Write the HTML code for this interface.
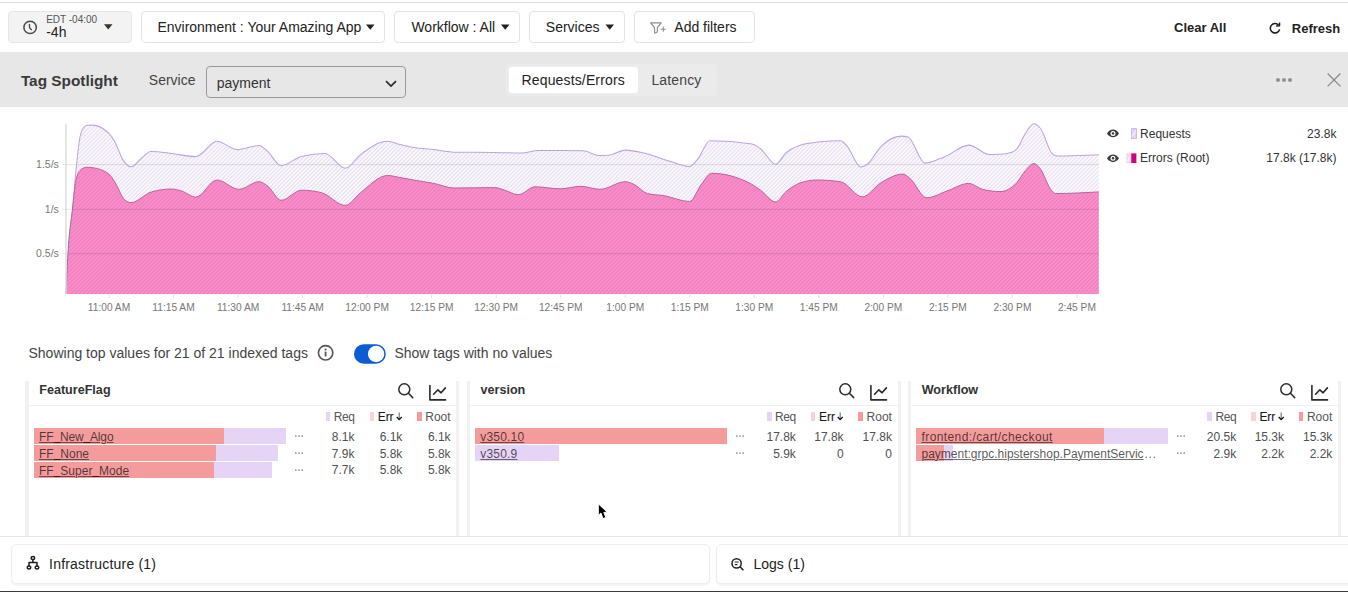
<!DOCTYPE html>
<html><head><meta charset="utf-8">
<style>
html,body{margin:0;padding:0;width:1348px;height:592px;overflow:hidden;background:#fff;}
body{position:relative;font-family:"Liberation Sans",sans-serif;}
.t{position:absolute;white-space:nowrap;}
.box{position:absolute;box-sizing:border-box;}
svg{position:absolute;overflow:visible;}
</style></head><body>
<div class="box" style="left:0;top:1.5px;width:1348px;height:1px;background:#dcdcdc"></div>
<div class="box" style="left:8px;top:11px;width:124px;height:32px;background:#f3f3f3;border:1px solid #e6e6e6;border-radius:4px"></div>
<svg style="left:0;top:0" width="1348" height="52"><circle cx="30.1" cy="27.4" r="6.2" fill="none" stroke="#4a4a4a" stroke-width="1.5"/><path d="M29.4,24.4 L29.6,27.6 Q29.9,28.6 31.4,29.6" fill="none" stroke="#4a4a4a" stroke-width="1.35" stroke-linecap="round"/><path d="M104,24.3 L112.5,24.3 L108.25,29.5 Z" fill="#333"/><path d="M366,24.5 L374.5,24.5 L370.25,29.8 Z" fill="#222"/><path d="M501,24.5 L509.5,24.5 L505.25,29.8 Z" fill="#222"/><path d="M605.5,24.5 L614,24.5 L609.75,29.8 Z" fill="#222"/><path d="M650.6,22.9 L661.3,22.9 L657.4,27.4 L657.3,31.9 L654.7,33.2 L654.4,27.4 Z" fill="none" stroke="#8e8e8e" stroke-width="1.15" stroke-linejoin="round"/><path d="M660.7,29.2 L665.8,29.2 M663.25,26.6 L663.25,31.8" stroke="#8e8e8e" stroke-width="1.05"/><path d="M1278.6,25.2 A4.7,4.7 0 1 0 1279.6,29.4" fill="none" stroke="#1a1a1a" stroke-width="1.5"/><path d="M1279.5,22.4 L1279.5,25.8 L1276.1,26.1" fill="none" stroke="#1a1a1a" stroke-width="1.5" stroke-linejoin="round"/></svg>
<div class="t" style="left:46.2px;top:14.84px;font-size:10px;line-height:10px;color:#555;font-weight:400;">EDT -04:00</div>
<div class="t" style="left:46.2px;top:25.35px;font-size:14px;line-height:14px;color:#222;font-weight:400;">-4h</div>
<div class="box" style="left:140.5px;top:11px;width:244.5px;height:32px;border:1px solid #e3e3e3;border-radius:4px"></div>
<div class="box" style="left:394px;top:11px;width:126px;height:32px;border:1px solid #e3e3e3;border-radius:4px"></div>
<div class="box" style="left:529px;top:11px;width:95.5px;height:32px;border:1px solid #e3e3e3;border-radius:4px"></div>
<div class="box" style="left:633.5px;top:11px;width:121.5px;height:32px;border:1px solid #e3e3e3;border-radius:4px"></div>
<div class="t" style="left:157.4px;top:20.15px;font-size:14px;line-height:14px;color:#222;font-weight:400;">Environment : Your Amazing App</div>
<div class="t" style="left:411.4px;top:20.15px;font-size:14px;line-height:14px;color:#222;font-weight:400;">Workflow : All</div>
<div class="t" style="left:545.8px;top:20.15px;font-size:14px;line-height:14px;color:#222;font-weight:400;">Services</div>
<div class="t" style="left:674.3px;top:20.15px;font-size:14px;line-height:14px;color:#222;font-weight:400;">Add filters</div>
<div class="t" style="left:1174px;top:20.80px;font-size:13px;line-height:13px;color:#222;font-weight:700;">Clear All</div>
<div class="t" style="left:1291.8px;top:21.90px;font-size:13px;line-height:13px;color:#222;font-weight:700;">Refresh</div>
<div class="box" style="left:0;top:52px;width:1348px;height:55px;background:#e7e7e7"></div>
<div class="t" style="left:20.9px;top:72.81px;font-size:15.35px;line-height:15.35px;color:#3a3a3a;font-weight:700;">Tag Spotlight</div>
<div class="t" style="left:148.8px;top:73.15px;font-size:14px;line-height:14px;color:#444;font-weight:400;">Service</div>
<div class="box" style="left:206px;top:66.3px;width:200px;height:31.8px;border:1.4px solid #9a9a9a;border-radius:4px"></div>
<div class="t" style="left:216.8px;top:75.75px;font-size:14px;line-height:14px;color:#333;font-weight:400;">payment</div>
<div class="box" style="left:506px;top:64px;width:211px;height:31.5px;background:#ebebeb;border-radius:4px"></div>
<div class="box" style="left:509px;top:67px;width:129px;height:26px;background:#fff;border-radius:3px"></div>
<div class="t" style="left:521.5px;top:73.15px;font-size:14px;line-height:14px;color:#222;font-weight:400;letter-spacing:0.15px">Requests/Errors</div>
<div class="t" style="left:651.4px;top:73.15px;font-size:14px;line-height:14px;color:#444;font-weight:400;letter-spacing:0.15px">Latency</div>
<svg style="left:0;top:0" width="1348" height="110"><path d="M386,81.2 L391,86 L396,81.2" fill="none" stroke="#2a2a2a" stroke-width="1.7"/><circle cx="1278" cy="80" r="2" fill="#8f8f8f"/><circle cx="1284" cy="80" r="2" fill="#8f8f8f"/><circle cx="1290" cy="80" r="2" fill="#8f8f8f"/><path d="M1327.6,73.5 L1340.4,86.4 M1340.4,73.5 L1327.6,86.4" stroke="#8a8a8a" stroke-width="1.3"/></svg>
<svg style="left:0;top:0" width="1348" height="330"><defs><pattern id="hR" width="2.83" height="4" patternUnits="userSpaceOnUse" patternTransform="rotate(45)"><rect width="2.83" height="4" fill="#fcf9fe"/><rect width="1" height="4" fill="#e4ddee"/></pattern><pattern id="hE" width="2.83" height="4" patternUnits="userSpaceOnUse" patternTransform="rotate(45)"><rect width="2.83" height="4" fill="#fb8dca"/><rect width="0.95" height="4" fill="#ec7dbc"/></pattern></defs><path d="M66.0,294.0 C66.8,279.3 67.5,264.6 68.3,253.0 C69.7,231.2 71.2,224.5 72.6,209.0 C73.9,195.0 75.2,177.5 76.5,165.0 C77.5,155.4 78.5,146.1 79.5,140.0 C80.8,131.9 82.2,129.0 83.5,127.5 C84.8,126.0 86.2,125.4 87.5,125.3 C89.1,125.2 90.8,125.1 92.4,125.1 C97.8,125.1 103.2,127.8 108.6,133.2 C110.6,135.2 112.7,137.9 114.7,141.4 C117.4,146.1 120.1,155.4 122.8,159.6 C125.5,163.9 128.3,166.7 131.0,166.7 C134.3,166.7 137.7,161.1 141.0,158.6 C144.4,156.0 147.8,151.5 151.2,151.5 C158.0,151.5 164.7,152.7 171.5,153.5 C179.6,154.4 187.7,156.6 195.8,156.6 C202.8,156.6 209.9,141.2 216.9,141.2 C223.7,141.2 230.4,149.6 237.2,149.6 C244.5,149.6 251.8,145.4 259.1,145.4 C261.9,145.4 264.8,148.9 267.6,151.3 C272.1,155.1 276.6,165.7 281.1,165.7 C287.9,165.7 294.6,158.1 301.4,156.4 C309.3,154.5 317.1,153.5 325.0,153.5 C331.8,153.5 338.5,168.2 345.3,168.2 C350.4,168.2 355.4,158.5 360.5,154.7 C369.5,148.0 378.5,141.2 387.5,141.2 C391.7,141.2 395.8,143.6 400.0,144.6 C404.5,145.7 409.0,146.6 413.5,147.4 C420.3,148.5 427.0,148.8 433.8,149.6 C441.1,150.4 448.4,152.1 455.7,152.2 C468.1,152.4 480.5,152.3 492.9,152.5 C502.5,152.6 512.0,153.0 521.6,153.0 C527.2,153.0 532.9,150.5 538.5,150.5 C553.1,150.5 567.8,150.6 582.4,150.8 C588.3,150.9 594.1,155.5 600.0,155.5 C602.8,155.5 605.6,155.4 608.4,155.2 C614.0,154.8 619.7,150.1 625.3,150.1 C631.5,150.1 637.7,151.6 643.9,153.0 C652.9,155.0 661.9,158.9 670.9,161.5 C677.1,163.3 683.3,166.5 689.5,166.5 C692.3,166.5 695.2,162.2 698.0,158.9 C701.9,154.3 705.9,140.7 709.8,140.7 C723.9,140.7 737.9,141.8 752.0,144.1 C754.8,144.6 757.7,146.8 760.5,148.8 C765.6,152.4 770.6,164.3 775.7,164.3 C779.1,164.3 782.4,156.0 785.8,153.0 C790.5,148.8 795.3,146.8 800.0,145.2 C806.8,142.9 813.5,142.4 820.3,141.7 C827.0,141.0 833.8,140.7 840.5,140.7 C842.8,140.7 845.0,143.9 847.3,146.3 C851.8,151.1 856.3,167.0 860.8,167.0 C863.1,167.0 865.3,165.7 867.6,164.0 C872.1,160.7 876.6,150.7 881.1,146.3 C887.9,139.6 894.6,136.1 901.4,136.1 C903.6,136.1 905.9,136.4 908.1,137.0 C913.7,138.5 919.4,163.1 925.0,163.1 C931.8,163.1 938.5,159.1 945.3,156.4 C953.2,153.3 961.0,145.1 968.9,145.1 C975.7,145.1 982.4,154.4 989.2,154.4 C992.8,154.4 996.4,154.3 1000.0,154.2 C1003.9,154.1 1007.9,153.5 1011.8,152.2 C1013.5,151.6 1015.2,150.7 1016.9,148.8 C1019.7,145.7 1022.5,137.8 1025.3,133.6 C1028.1,129.4 1031.0,123.8 1033.8,123.8 C1036.0,123.8 1038.3,125.8 1040.5,128.5 C1044.5,133.3 1048.4,150.6 1052.4,153.9 C1054.1,155.3 1055.7,156.0 1057.4,156.0 C1071.2,156.0 1085.0,155.3 1098.8,154.7 L1098.8,294 L66,294 Z" fill="url(#hR)"/><path d="M66.0,294.0 C66.7,279.2 67.3,264.5 68.0,253.0 C69.5,227.2 71.0,222.5 72.5,209.0 C73.6,199.1 74.7,186.5 75.8,181.0 C77.2,174.0 78.6,171.9 80.0,170.5 C82.1,168.4 84.3,167.3 86.4,167.3 C88.4,167.3 90.4,167.4 92.4,167.7 C97.8,168.4 103.2,169.7 108.6,173.8 C110.6,175.3 112.7,178.9 114.7,181.9 C118.1,187.0 121.5,197.3 124.9,200.1 C126.9,201.8 129.0,202.6 131.0,202.6 C137.7,202.6 144.5,194.0 151.2,192.0 C158.0,190.0 164.7,189.0 171.5,189.0 C174.9,189.0 178.2,190.0 181.6,191.0 C186.3,192.4 191.1,197.1 195.8,197.1 C202.8,197.1 209.9,180.0 216.9,180.0 C224.2,180.0 231.6,189.3 238.9,189.3 C245.6,189.3 252.4,181.7 259.1,181.7 C261.9,181.7 264.8,184.0 267.6,186.0 C272.1,189.2 276.6,200.3 281.1,200.3 C287.9,200.3 294.6,190.2 301.4,190.2 C308.1,190.2 314.9,191.0 321.6,192.7 C329.5,194.7 337.4,205.4 345.3,205.4 C350.4,205.4 355.4,196.6 360.5,192.7 C369.5,185.8 378.5,175.5 387.5,175.5 C391.7,175.5 395.8,176.8 400.0,177.5 C404.5,178.3 409.0,179.2 413.5,180.0 C420.3,181.2 427.0,182.1 433.8,183.4 C440.5,184.7 447.3,188.0 454.0,188.0 C467.5,188.0 481.1,187.6 494.6,187.6 C498.0,187.6 501.3,189.2 504.7,190.2 C509.2,191.5 513.7,194.7 518.2,194.7 C523.8,194.7 529.5,186.8 535.1,186.8 C543.6,186.8 552.0,188.8 560.5,188.8 C567.2,188.8 574.0,186.3 580.7,186.3 C587.1,186.3 593.6,189.3 600.0,189.3 C608.4,189.3 616.9,181.7 625.3,181.7 C628.1,181.7 631.0,183.0 633.8,184.3 C638.3,186.3 642.8,192.3 647.3,193.5 C652.9,195.0 658.6,194.7 664.2,195.7 C672.6,197.1 681.1,201.5 689.5,201.5 C693.5,201.5 697.4,189.3 701.4,184.3 C704.8,180.1 708.1,173.3 711.5,173.3 C723.9,173.3 736.2,176.4 748.6,182.6 C752.6,184.6 756.5,187.4 760.5,190.2 C765.6,193.7 770.6,202.0 775.7,202.0 C779.1,202.0 782.4,194.7 785.8,191.9 C790.5,187.9 795.3,184.7 800.0,183.0 C805.6,181.0 811.3,180.0 816.9,180.0 C824.8,180.0 832.6,180.6 840.5,181.7 C847.8,182.8 855.2,196.9 862.5,196.9 C868.7,196.9 874.9,186.3 881.1,182.6 C888.4,178.3 895.7,174.1 903.0,174.1 C905.3,174.1 907.5,176.6 909.8,178.3 C915.4,182.6 921.1,197.8 926.7,197.8 C933.5,197.8 940.2,193.3 947.0,191.0 C954.3,188.5 961.6,183.4 968.9,183.4 C973.4,183.4 977.9,188.1 982.4,189.3 C988.3,190.8 994.1,191.6 1000.0,191.6 C1005.6,191.6 1011.3,188.6 1016.9,182.6 C1019.7,179.6 1022.5,173.9 1025.3,170.7 C1028.1,167.5 1031.0,163.6 1033.8,163.6 C1036.0,163.6 1038.3,166.2 1040.5,169.1 C1043.9,173.5 1047.3,185.2 1050.7,189.3 C1052.4,191.3 1054.0,193.5 1055.7,193.5 C1070.1,193.5 1084.4,192.7 1098.8,191.9 L1098.8,294 L66,294 Z" fill="url(#hE)"/><line x1="62" y1="164.6" x2="1099" y2="164.6" stroke="rgba(0,0,0,0.11)" stroke-width="1"/><line x1="62" y1="209.3" x2="1099" y2="209.3" stroke="rgba(0,0,0,0.11)" stroke-width="1"/><line x1="62" y1="253.7" x2="1099" y2="253.7" stroke="rgba(0,0,0,0.11)" stroke-width="1"/><path d="M66.0,294.0 C66.8,279.3 67.5,264.6 68.3,253.0 C69.7,231.2 71.2,224.5 72.6,209.0 C73.9,195.0 75.2,177.5 76.5,165.0 C77.5,155.4 78.5,146.1 79.5,140.0 C80.8,131.9 82.2,129.0 83.5,127.5 C84.8,126.0 86.2,125.4 87.5,125.3 C89.1,125.2 90.8,125.1 92.4,125.1 C97.8,125.1 103.2,127.8 108.6,133.2 C110.6,135.2 112.7,137.9 114.7,141.4 C117.4,146.1 120.1,155.4 122.8,159.6 C125.5,163.9 128.3,166.7 131.0,166.7 C134.3,166.7 137.7,161.1 141.0,158.6 C144.4,156.0 147.8,151.5 151.2,151.5 C158.0,151.5 164.7,152.7 171.5,153.5 C179.6,154.4 187.7,156.6 195.8,156.6 C202.8,156.6 209.9,141.2 216.9,141.2 C223.7,141.2 230.4,149.6 237.2,149.6 C244.5,149.6 251.8,145.4 259.1,145.4 C261.9,145.4 264.8,148.9 267.6,151.3 C272.1,155.1 276.6,165.7 281.1,165.7 C287.9,165.7 294.6,158.1 301.4,156.4 C309.3,154.5 317.1,153.5 325.0,153.5 C331.8,153.5 338.5,168.2 345.3,168.2 C350.4,168.2 355.4,158.5 360.5,154.7 C369.5,148.0 378.5,141.2 387.5,141.2 C391.7,141.2 395.8,143.6 400.0,144.6 C404.5,145.7 409.0,146.6 413.5,147.4 C420.3,148.5 427.0,148.8 433.8,149.6 C441.1,150.4 448.4,152.1 455.7,152.2 C468.1,152.4 480.5,152.3 492.9,152.5 C502.5,152.6 512.0,153.0 521.6,153.0 C527.2,153.0 532.9,150.5 538.5,150.5 C553.1,150.5 567.8,150.6 582.4,150.8 C588.3,150.9 594.1,155.5 600.0,155.5 C602.8,155.5 605.6,155.4 608.4,155.2 C614.0,154.8 619.7,150.1 625.3,150.1 C631.5,150.1 637.7,151.6 643.9,153.0 C652.9,155.0 661.9,158.9 670.9,161.5 C677.1,163.3 683.3,166.5 689.5,166.5 C692.3,166.5 695.2,162.2 698.0,158.9 C701.9,154.3 705.9,140.7 709.8,140.7 C723.9,140.7 737.9,141.8 752.0,144.1 C754.8,144.6 757.7,146.8 760.5,148.8 C765.6,152.4 770.6,164.3 775.7,164.3 C779.1,164.3 782.4,156.0 785.8,153.0 C790.5,148.8 795.3,146.8 800.0,145.2 C806.8,142.9 813.5,142.4 820.3,141.7 C827.0,141.0 833.8,140.7 840.5,140.7 C842.8,140.7 845.0,143.9 847.3,146.3 C851.8,151.1 856.3,167.0 860.8,167.0 C863.1,167.0 865.3,165.7 867.6,164.0 C872.1,160.7 876.6,150.7 881.1,146.3 C887.9,139.6 894.6,136.1 901.4,136.1 C903.6,136.1 905.9,136.4 908.1,137.0 C913.7,138.5 919.4,163.1 925.0,163.1 C931.8,163.1 938.5,159.1 945.3,156.4 C953.2,153.3 961.0,145.1 968.9,145.1 C975.7,145.1 982.4,154.4 989.2,154.4 C992.8,154.4 996.4,154.3 1000.0,154.2 C1003.9,154.1 1007.9,153.5 1011.8,152.2 C1013.5,151.6 1015.2,150.7 1016.9,148.8 C1019.7,145.7 1022.5,137.8 1025.3,133.6 C1028.1,129.4 1031.0,123.8 1033.8,123.8 C1036.0,123.8 1038.3,125.8 1040.5,128.5 C1044.5,133.3 1048.4,150.6 1052.4,153.9 C1054.1,155.3 1055.7,156.0 1057.4,156.0 C1071.2,156.0 1085.0,155.3 1098.8,154.7" fill="none" stroke="#bfa3de" stroke-width="1.05"/><path d="M66.0,294.0 C66.7,279.2 67.3,264.5 68.0,253.0 C69.5,227.2 71.0,222.5 72.5,209.0 C73.6,199.1 74.7,186.5 75.8,181.0 C77.2,174.0 78.6,171.9 80.0,170.5 C82.1,168.4 84.3,167.3 86.4,167.3 C88.4,167.3 90.4,167.4 92.4,167.7 C97.8,168.4 103.2,169.7 108.6,173.8 C110.6,175.3 112.7,178.9 114.7,181.9 C118.1,187.0 121.5,197.3 124.9,200.1 C126.9,201.8 129.0,202.6 131.0,202.6 C137.7,202.6 144.5,194.0 151.2,192.0 C158.0,190.0 164.7,189.0 171.5,189.0 C174.9,189.0 178.2,190.0 181.6,191.0 C186.3,192.4 191.1,197.1 195.8,197.1 C202.8,197.1 209.9,180.0 216.9,180.0 C224.2,180.0 231.6,189.3 238.9,189.3 C245.6,189.3 252.4,181.7 259.1,181.7 C261.9,181.7 264.8,184.0 267.6,186.0 C272.1,189.2 276.6,200.3 281.1,200.3 C287.9,200.3 294.6,190.2 301.4,190.2 C308.1,190.2 314.9,191.0 321.6,192.7 C329.5,194.7 337.4,205.4 345.3,205.4 C350.4,205.4 355.4,196.6 360.5,192.7 C369.5,185.8 378.5,175.5 387.5,175.5 C391.7,175.5 395.8,176.8 400.0,177.5 C404.5,178.3 409.0,179.2 413.5,180.0 C420.3,181.2 427.0,182.1 433.8,183.4 C440.5,184.7 447.3,188.0 454.0,188.0 C467.5,188.0 481.1,187.6 494.6,187.6 C498.0,187.6 501.3,189.2 504.7,190.2 C509.2,191.5 513.7,194.7 518.2,194.7 C523.8,194.7 529.5,186.8 535.1,186.8 C543.6,186.8 552.0,188.8 560.5,188.8 C567.2,188.8 574.0,186.3 580.7,186.3 C587.1,186.3 593.6,189.3 600.0,189.3 C608.4,189.3 616.9,181.7 625.3,181.7 C628.1,181.7 631.0,183.0 633.8,184.3 C638.3,186.3 642.8,192.3 647.3,193.5 C652.9,195.0 658.6,194.7 664.2,195.7 C672.6,197.1 681.1,201.5 689.5,201.5 C693.5,201.5 697.4,189.3 701.4,184.3 C704.8,180.1 708.1,173.3 711.5,173.3 C723.9,173.3 736.2,176.4 748.6,182.6 C752.6,184.6 756.5,187.4 760.5,190.2 C765.6,193.7 770.6,202.0 775.7,202.0 C779.1,202.0 782.4,194.7 785.8,191.9 C790.5,187.9 795.3,184.7 800.0,183.0 C805.6,181.0 811.3,180.0 816.9,180.0 C824.8,180.0 832.6,180.6 840.5,181.7 C847.8,182.8 855.2,196.9 862.5,196.9 C868.7,196.9 874.9,186.3 881.1,182.6 C888.4,178.3 895.7,174.1 903.0,174.1 C905.3,174.1 907.5,176.6 909.8,178.3 C915.4,182.6 921.1,197.8 926.7,197.8 C933.5,197.8 940.2,193.3 947.0,191.0 C954.3,188.5 961.6,183.4 968.9,183.4 C973.4,183.4 977.9,188.1 982.4,189.3 C988.3,190.8 994.1,191.6 1000.0,191.6 C1005.6,191.6 1011.3,188.6 1016.9,182.6 C1019.7,179.6 1022.5,173.9 1025.3,170.7 C1028.1,167.5 1031.0,163.6 1033.8,163.6 C1036.0,163.6 1038.3,166.2 1040.5,169.1 C1043.9,173.5 1047.3,185.2 1050.7,189.3 C1052.4,191.3 1054.0,193.5 1055.7,193.5 C1070.1,193.5 1084.4,192.7 1098.8,191.9" fill="none" stroke="#b8649a" stroke-width="1"/><line x1="66" y1="124" x2="66" y2="294" stroke="#dcdcdc" stroke-width="1.5"/><line x1="109.0" y1="295" x2="109.0" y2="298" stroke="#e0e0e0" stroke-width="1"/><line x1="173.5" y1="295" x2="173.5" y2="298" stroke="#e0e0e0" stroke-width="1"/><line x1="238.1" y1="295" x2="238.1" y2="298" stroke="#e0e0e0" stroke-width="1"/><line x1="302.6" y1="295" x2="302.6" y2="298" stroke="#e0e0e0" stroke-width="1"/><line x1="367.1" y1="295" x2="367.1" y2="298" stroke="#e0e0e0" stroke-width="1"/><line x1="431.6" y1="295" x2="431.6" y2="298" stroke="#e0e0e0" stroke-width="1"/><line x1="496.2" y1="295" x2="496.2" y2="298" stroke="#e0e0e0" stroke-width="1"/><line x1="560.7" y1="295" x2="560.7" y2="298" stroke="#e0e0e0" stroke-width="1"/><line x1="625.2" y1="295" x2="625.2" y2="298" stroke="#e0e0e0" stroke-width="1"/><line x1="689.8" y1="295" x2="689.8" y2="298" stroke="#e0e0e0" stroke-width="1"/><line x1="754.3" y1="295" x2="754.3" y2="298" stroke="#e0e0e0" stroke-width="1"/><line x1="818.8" y1="295" x2="818.8" y2="298" stroke="#e0e0e0" stroke-width="1"/><line x1="883.4" y1="295" x2="883.4" y2="298" stroke="#e0e0e0" stroke-width="1"/><line x1="947.9" y1="295" x2="947.9" y2="298" stroke="#e0e0e0" stroke-width="1"/><line x1="1012.4" y1="295" x2="1012.4" y2="298" stroke="#e0e0e0" stroke-width="1"/><line x1="1077.0" y1="295" x2="1077.0" y2="298" stroke="#e0e0e0" stroke-width="1"/></svg>
<div class="t" style="right:1289.2px;top:159.11px;font-size:10.5px;line-height:10.5px;color:#777;font-weight:400;">1.5/s</div>
<div class="t" style="right:1289.2px;top:203.71px;font-size:10.5px;line-height:10.5px;color:#777;font-weight:400;">1/s</div>
<div class="t" style="right:1289.2px;top:248.11px;font-size:10.5px;line-height:10.5px;color:#777;font-weight:400;">0.5/s</div>
<div class="t" style="left:59.0px;width:100px;text-align:center;top:303.17px;font-size:10.2px;line-height:10.2px;color:#777;font-weight:400;">11:00 AM</div>
<div class="t" style="left:123.53px;width:100px;text-align:center;top:303.17px;font-size:10.2px;line-height:10.2px;color:#777;font-weight:400;">11:15 AM</div>
<div class="t" style="left:188.06px;width:100px;text-align:center;top:303.17px;font-size:10.2px;line-height:10.2px;color:#777;font-weight:400;">11:30 AM</div>
<div class="t" style="left:252.59000000000003px;width:100px;text-align:center;top:303.17px;font-size:10.2px;line-height:10.2px;color:#777;font-weight:400;">11:45 AM</div>
<div class="t" style="left:317.12px;width:100px;text-align:center;top:303.17px;font-size:10.2px;line-height:10.2px;color:#777;font-weight:400;">12:00 PM</div>
<div class="t" style="left:381.65px;width:100px;text-align:center;top:303.17px;font-size:10.2px;line-height:10.2px;color:#777;font-weight:400;">12:15 PM</div>
<div class="t" style="left:446.18px;width:100px;text-align:center;top:303.17px;font-size:10.2px;line-height:10.2px;color:#777;font-weight:400;">12:30 PM</div>
<div class="t" style="left:510.71000000000004px;width:100px;text-align:center;top:303.17px;font-size:10.2px;line-height:10.2px;color:#777;font-weight:400;">12:45 PM</div>
<div class="t" style="left:575.24px;width:100px;text-align:center;top:303.17px;font-size:10.2px;line-height:10.2px;color:#777;font-weight:400;">1:00 PM</div>
<div class="t" style="left:639.77px;width:100px;text-align:center;top:303.17px;font-size:10.2px;line-height:10.2px;color:#777;font-weight:400;">1:15 PM</div>
<div class="t" style="left:704.3px;width:100px;text-align:center;top:303.17px;font-size:10.2px;line-height:10.2px;color:#777;font-weight:400;">1:30 PM</div>
<div class="t" style="left:768.83px;width:100px;text-align:center;top:303.17px;font-size:10.2px;line-height:10.2px;color:#777;font-weight:400;">1:45 PM</div>
<div class="t" style="left:833.36px;width:100px;text-align:center;top:303.17px;font-size:10.2px;line-height:10.2px;color:#777;font-weight:400;">2:00 PM</div>
<div class="t" style="left:897.89px;width:100px;text-align:center;top:303.17px;font-size:10.2px;line-height:10.2px;color:#777;font-weight:400;">2:15 PM</div>
<div class="t" style="left:962.4200000000001px;width:100px;text-align:center;top:303.17px;font-size:10.2px;line-height:10.2px;color:#777;font-weight:400;">2:30 PM</div>
<div class="t" style="left:1026.95px;width:100px;text-align:center;top:303.17px;font-size:10.2px;line-height:10.2px;color:#777;font-weight:400;">2:45 PM</div>
<svg style="left:0;top:0" width="1348" height="200"><defs><pattern id="hL" width="3" height="3" patternUnits="userSpaceOnUse" patternTransform="rotate(45)"><rect width="3" height="3" fill="#fff"/><rect width="1" height="3" fill="#c8aee8"/></pattern><pattern id="hL2" width="3" height="3" patternUnits="userSpaceOnUse" patternTransform="rotate(45)"><rect width="3" height="3" fill="#fff"/><rect width="1" height="3" fill="#f2b3d6"/></pattern></defs><path d="M1107,133.4 C1110,128.3 1116,128.3 1119,133.4 C1116,138.5 1110,138.5 1107,133.4 Z" fill="#3a3a3a"/><circle cx="1113" cy="133.4" r="2.5" fill="#fff"/><circle cx="1113" cy="133.4" r="1.2" fill="#3a3a3a"/><path d="M1107,158.3 C1110,153.2 1116,153.2 1119,158.3 C1116,163.4 1110,163.4 1107,158.3 Z" fill="#3a3a3a"/><circle cx="1113" cy="158.3" r="2.5" fill="#fff"/><circle cx="1113" cy="158.3" r="1.2" fill="#3a3a3a"/><rect x="1131.6" y="128.6" width="4.8" height="9.8" fill="#e2d4f5" stroke="#c9b1ea" stroke-width="0.9"/><path d="M1132.2,136.5 L1135.8,130.5" stroke="#fff" stroke-width="1"/><rect x="1126.9" y="153.8" width="4.4" height="9" fill="#fbe3ef" stroke="#f3c3dc" stroke-width="0.8"/><path d="M1127.5,161.5 L1130.8,155.5" stroke="#fff" stroke-width="1"/><rect x="1131.3" y="153.4" width="5.1" height="9.6" fill="#d6007f"/></svg>
<div class="t" style="left:1140.1px;top:127.64px;font-size:12px;line-height:12px;color:#333;font-weight:400;">Requests</div>
<div class="t" style="left:1140.1px;top:152.44px;font-size:12px;line-height:12px;color:#333;font-weight:400;">Errors (Root)</div>
<div class="t" style="right:11.599999999999909px;top:127.64px;font-size:12px;line-height:12px;color:#333;font-weight:400;">23.8k</div>
<div class="t" style="right:11.599999999999909px;top:152.44px;font-size:12px;line-height:12px;color:#333;font-weight:400;">17.8k (17.8k)</div>
<div class="t" style="left:28.5px;top:346.05px;font-size:14px;line-height:14px;color:#444;font-weight:400;">Showing top values for 21 of 21 indexed tags</div>
<svg style="left:0;top:330" width="1348" height="40"><circle cx="325.6" cy="22.8" r="7.2" fill="none" stroke="#555" stroke-width="1.6"/><circle cx="325.6" cy="19.5" r="1.1" fill="#555"/><line x1="325.6" y1="21.6" x2="325.6" y2="26.4" stroke="#555" stroke-width="1.8"/><rect x="354" y="14.2" width="31.8" height="19.5" rx="9.75" fill="#0b5cd5"/><circle cx="376.1" cy="24" r="8.2" fill="#fff"/></svg>
<div class="t" style="left:394.4px;top:345.75px;font-size:14px;line-height:14px;color:#444;font-weight:400;">Show tags with no values</div>
<div class="box" style="left:0;top:536px;width:1348px;height:1px;background:#e6e6e6"></div>
<div class="box" style="left:25.4px;top:381.3px;width:3.3px;height:154.7px;background:#f1f1f1"></div>
<div class="box" style="left:456.2px;top:381.3px;width:3px;height:154.7px;background:#f1f1f1"></div>
<div class="box" style="left:28.7px;top:405px;width:427.8px;height:1px;background:#efefef"></div>
<div class="t" style="left:39.2px;top:383.63px;font-size:12.6px;line-height:12.6px;color:#333;font-weight:700;">FeatureFlag</div>
<svg style="left:397.9px;top:384px" width="16" height="16"><circle cx="6.3" cy="5.3" r="5.5" fill="none" stroke="#2a2a2a" stroke-width="1.5"/><path d="M10.4,9.3 L14.7,13.6" stroke="#2a2a2a" stroke-width="1.5" stroke-linecap="round"/></svg>
<svg style="left:428.9px;top:385px" width="18" height="16"><path d="M0.9,0.6 L0.9,14.9 L16.5,14.9" fill="none" stroke="#2a2a2a" stroke-width="1.6" stroke-linecap="round" stroke-linejoin="round"/><path d="M4.6,9.2 L8.9,4.8 L12.1,7.8 L16.4,2.9" fill="none" stroke="#2a2a2a" stroke-width="1.6" stroke-linecap="round" stroke-linejoin="round"/></svg>
<div class="box" style="left:325.7px;top:412px;width:4.8px;height:8.7px;background:#e5d4f6"></div>
<div class="t" style="right:993.5px;top:410.54px;font-size:12px;line-height:12px;color:#555;font-weight:400;letter-spacing:-0.4px">Req</div>
<div class="box" style="left:369.5px;top:412px;width:4.5px;height:8.7px;background:#f7d3d5"></div>
<div class="t" style="left:377.7px;top:410.54px;font-size:12px;line-height:12px;color:#1a1a1a;font-weight:400;letter-spacing:-0.05px;-webkit-text-stroke:0.1px #1a1a1a">Err</div>
<svg style="left:395.90000000000003px;top:412px" width="8" height="9"><path d="M3.2,0.5 L3.2,7.5" stroke="#777" stroke-width="1.2"/><path d="M0.7,5 L3.2,7.6 L5.7,5" fill="none" stroke="#111" stroke-width="1.3" stroke-linejoin="round"/></svg>
<div class="box" style="left:416.90000000000003px;top:412px;width:4.9px;height:8.7px;background:#f49c9c"></div>
<div class="t" style="right:897.4px;top:410.54px;font-size:12px;line-height:12px;color:#555;font-weight:400;">Root</div>
<div class="box" style="left:33.8px;top:428.3px;width:251.89999999999998px;height:15.5px;background:#e5d4f6"></div>
<div class="box" style="left:33.8px;top:428.3px;width:189.89999999999998px;height:15.5px;background:#f49c9c"></div>
<div class="t" style="left:39.0px;top:431.04px;font-size:12px;line-height:12px;color:rgba(0,0,0,0.68);font-weight:400;text-decoration:underline;text-decoration-color:rgba(0,0,0,0.55);text-decoration-thickness:1.2px;text-underline-offset:1.4px;letter-spacing:-0.15px">FF<span style="position:relative;top:-0.9px">_</span>New<span style="position:relative;top:-0.9px">_</span>Algo</div>
<svg style="left:295.0px;top:434.8px" width="10" height="3"><rect x="0" y="0.3" width="1.6" height="1.6" fill="#999"/><rect x="3.2" y="0.3" width="1.6" height="1.6" fill="#999"/><rect x="6.4" y="0.3" width="1.6" height="1.6" fill="#999"/></svg>
<div class="t" style="right:993.5px;top:430.64px;font-size:12px;line-height:12px;color:#505050;font-weight:400;">8.1k</div>
<div class="t" style="right:945.7px;top:430.64px;font-size:12px;line-height:12px;color:#505050;font-weight:400;">6.1k</div>
<div class="t" style="right:897.4px;top:430.64px;font-size:12px;line-height:12px;color:#505050;font-weight:400;">6.1k</div>
<div class="box" style="left:33.8px;top:445.3px;width:244.0px;height:15.5px;background:#e5d4f6"></div>
<div class="box" style="left:33.8px;top:445.3px;width:181.8px;height:15.5px;background:#f49c9c"></div>
<div class="t" style="left:39.0px;top:447.94px;font-size:12px;line-height:12px;color:rgba(0,0,0,0.68);font-weight:400;text-decoration:underline;text-decoration-color:rgba(0,0,0,0.55);text-decoration-thickness:1.2px;text-underline-offset:1.4px;letter-spacing:0px">FF<span style="position:relative;top:-0.9px">_</span>None</div>
<svg style="left:295.0px;top:451.8px" width="10" height="3"><rect x="0" y="0.3" width="1.6" height="1.6" fill="#999"/><rect x="3.2" y="0.3" width="1.6" height="1.6" fill="#999"/><rect x="6.4" y="0.3" width="1.6" height="1.6" fill="#999"/></svg>
<div class="t" style="right:993.5px;top:447.54px;font-size:12px;line-height:12px;color:#505050;font-weight:400;">7.9k</div>
<div class="t" style="right:945.7px;top:447.54px;font-size:12px;line-height:12px;color:#505050;font-weight:400;">5.8k</div>
<div class="t" style="right:897.4px;top:447.54px;font-size:12px;line-height:12px;color:#505050;font-weight:400;">5.8k</div>
<div class="box" style="left:33.8px;top:462.3px;width:238.0px;height:15.5px;background:#e5d4f6"></div>
<div class="box" style="left:33.8px;top:462.3px;width:180.0px;height:15.5px;background:#f49c9c"></div>
<div class="t" style="left:39.0px;top:464.84px;font-size:12px;line-height:12px;color:rgba(0,0,0,0.68);font-weight:400;text-decoration:underline;text-decoration-color:rgba(0,0,0,0.55);text-decoration-thickness:1.2px;text-underline-offset:1.4px;letter-spacing:0px">FF<span style="position:relative;top:-0.9px">_</span>Super<span style="position:relative;top:-0.9px">_</span>Mode</div>
<svg style="left:295.0px;top:468.8px" width="10" height="3"><rect x="0" y="0.3" width="1.6" height="1.6" fill="#999"/><rect x="3.2" y="0.3" width="1.6" height="1.6" fill="#999"/><rect x="6.4" y="0.3" width="1.6" height="1.6" fill="#999"/></svg>
<div class="t" style="right:993.5px;top:464.44px;font-size:12px;line-height:12px;color:#505050;font-weight:400;">7.7k</div>
<div class="t" style="right:945.7px;top:464.44px;font-size:12px;line-height:12px;color:#505050;font-weight:400;">5.8k</div>
<div class="t" style="right:897.4px;top:464.44px;font-size:12px;line-height:12px;color:#505050;font-weight:400;">5.8k</div>
<div class="box" style="left:466.7px;top:381.3px;width:3.3px;height:154.7px;background:#f1f1f1"></div>
<div class="box" style="left:897.5px;top:381.3px;width:3px;height:154.7px;background:#f1f1f1"></div>
<div class="box" style="left:470.0px;top:405px;width:427.79999999999995px;height:1px;background:#efefef"></div>
<div class="t" style="left:480.5px;top:383.63px;font-size:12.6px;line-height:12.6px;color:#333;font-weight:700;">version</div>
<svg style="left:839.1999999999999px;top:384px" width="16" height="16"><circle cx="6.3" cy="5.3" r="5.5" fill="none" stroke="#2a2a2a" stroke-width="1.5"/><path d="M10.4,9.3 L14.7,13.6" stroke="#2a2a2a" stroke-width="1.5" stroke-linecap="round"/></svg>
<svg style="left:870.1999999999999px;top:385px" width="18" height="16"><path d="M0.9,0.6 L0.9,14.9 L16.5,14.9" fill="none" stroke="#2a2a2a" stroke-width="1.6" stroke-linecap="round" stroke-linejoin="round"/><path d="M4.6,9.2 L8.9,4.8 L12.1,7.8 L16.4,2.9" fill="none" stroke="#2a2a2a" stroke-width="1.6" stroke-linecap="round" stroke-linejoin="round"/></svg>
<div class="box" style="left:767.0px;top:412px;width:4.8px;height:8.7px;background:#e5d4f6"></div>
<div class="t" style="right:552.2px;top:410.54px;font-size:12px;line-height:12px;color:#555;font-weight:400;letter-spacing:-0.4px">Req</div>
<div class="box" style="left:810.8px;top:412px;width:4.5px;height:8.7px;background:#f7d3d5"></div>
<div class="t" style="left:818.9999999999999px;top:410.54px;font-size:12px;line-height:12px;color:#1a1a1a;font-weight:400;letter-spacing:-0.05px;-webkit-text-stroke:0.1px #1a1a1a">Err</div>
<svg style="left:837.1999999999999px;top:412px" width="8" height="9"><path d="M3.2,0.5 L3.2,7.5" stroke="#777" stroke-width="1.2"/><path d="M0.7,5 L3.2,7.6 L5.7,5" fill="none" stroke="#111" stroke-width="1.3" stroke-linejoin="round"/></svg>
<div class="box" style="left:858.1999999999999px;top:412px;width:4.9px;height:8.7px;background:#f49c9c"></div>
<div class="t" style="right:456.1px;top:410.54px;font-size:12px;line-height:12px;color:#555;font-weight:400;">Root</div>
<div class="box" style="left:475.1px;top:428.3px;width:251.89999999999998px;height:15.5px;background:#e5d4f6"></div>
<div class="box" style="left:475.1px;top:428.3px;width:251.89999999999998px;height:15.5px;background:#f49c9c"></div>
<div class="t" style="left:480.3px;top:431.04px;font-size:12px;line-height:12px;color:rgba(0,0,0,0.68);font-weight:400;text-decoration:underline;text-decoration-color:rgba(0,0,0,0.55);text-decoration-thickness:1.2px;text-underline-offset:1.4px;letter-spacing:0.18px">v350.10</div>
<svg style="left:736.3px;top:434.8px" width="10" height="3"><rect x="0" y="0.3" width="1.6" height="1.6" fill="#999"/><rect x="3.2" y="0.3" width="1.6" height="1.6" fill="#999"/><rect x="6.4" y="0.3" width="1.6" height="1.6" fill="#999"/></svg>
<div class="t" style="right:552.2px;top:430.64px;font-size:12px;line-height:12px;color:#505050;font-weight:400;">17.8k</div>
<div class="t" style="right:504.4000000000001px;top:430.64px;font-size:12px;line-height:12px;color:#505050;font-weight:400;">17.8k</div>
<div class="t" style="right:456.1px;top:430.64px;font-size:12px;line-height:12px;color:#505050;font-weight:400;">17.8k</div>
<div class="box" style="left:475.1px;top:445.3px;width:83.89999999999998px;height:15.5px;background:#e5d4f6"></div>
<div class="t" style="left:480.3px;top:447.94px;font-size:12px;line-height:12px;color:rgba(0,0,0,0.68);font-weight:400;text-decoration:underline;text-decoration-color:rgba(0,0,0,0.55);text-decoration-thickness:1.2px;text-underline-offset:1.4px;letter-spacing:0.18px">v350.9</div>
<svg style="left:736.3px;top:451.8px" width="10" height="3"><rect x="0" y="0.3" width="1.6" height="1.6" fill="#999"/><rect x="3.2" y="0.3" width="1.6" height="1.6" fill="#999"/><rect x="6.4" y="0.3" width="1.6" height="1.6" fill="#999"/></svg>
<div class="t" style="right:552.2px;top:447.54px;font-size:12px;line-height:12px;color:#505050;font-weight:400;">5.9k</div>
<div class="t" style="right:504.4000000000001px;top:447.54px;font-size:12px;line-height:12px;color:#505050;font-weight:400;">0</div>
<div class="t" style="right:456.1px;top:447.54px;font-size:12px;line-height:12px;color:#505050;font-weight:400;">0</div>
<div class="box" style="left:907.9000000000001px;top:381.3px;width:3.3px;height:154.7px;background:#f1f1f1"></div>
<div class="box" style="left:1337.9px;top:381.3px;width:3px;height:154.7px;background:#f1f1f1"></div>
<div class="box" style="left:911.2px;top:405px;width:427.0px;height:1px;background:#efefef"></div>
<div class="t" style="left:921.7px;top:383.63px;font-size:12.6px;line-height:12.6px;color:#333;font-weight:700;">Workflow</div>
<svg style="left:1279.6000000000001px;top:384px" width="16" height="16"><circle cx="6.3" cy="5.3" r="5.5" fill="none" stroke="#2a2a2a" stroke-width="1.5"/><path d="M10.4,9.3 L14.7,13.6" stroke="#2a2a2a" stroke-width="1.5" stroke-linecap="round"/></svg>
<svg style="left:1310.6000000000001px;top:385px" width="18" height="16"><path d="M0.9,0.6 L0.9,14.9 L16.5,14.9" fill="none" stroke="#2a2a2a" stroke-width="1.6" stroke-linecap="round" stroke-linejoin="round"/><path d="M4.6,9.2 L8.9,4.8 L12.1,7.8 L16.4,2.9" fill="none" stroke="#2a2a2a" stroke-width="1.6" stroke-linecap="round" stroke-linejoin="round"/></svg>
<div class="box" style="left:1207.4px;top:412px;width:4.8px;height:8.7px;background:#e5d4f6"></div>
<div class="t" style="right:111.79999999999995px;top:410.54px;font-size:12px;line-height:12px;color:#555;font-weight:400;letter-spacing:-0.4px">Req</div>
<div class="box" style="left:1251.2px;top:412px;width:4.5px;height:8.7px;background:#f7d3d5"></div>
<div class="t" style="left:1259.4px;top:410.54px;font-size:12px;line-height:12px;color:#1a1a1a;font-weight:400;letter-spacing:-0.05px;-webkit-text-stroke:0.1px #1a1a1a">Err</div>
<svg style="left:1277.6px;top:412px" width="8" height="9"><path d="M3.2,0.5 L3.2,7.5" stroke="#777" stroke-width="1.2"/><path d="M0.7,5 L3.2,7.6 L5.7,5" fill="none" stroke="#111" stroke-width="1.3" stroke-linejoin="round"/></svg>
<div class="box" style="left:1298.6px;top:412px;width:4.9px;height:8.7px;background:#f49c9c"></div>
<div class="t" style="right:15.700000000000045px;top:410.54px;font-size:12px;line-height:12px;color:#555;font-weight:400;">Root</div>
<div class="box" style="left:916.3000000000001px;top:428.3px;width:251.4999999999999px;height:15.5px;background:#e5d4f6"></div>
<div class="box" style="left:916.3000000000001px;top:428.3px;width:187.29999999999984px;height:15.5px;background:#f49c9c"></div>
<div class="t" style="left:921.5000000000001px;top:431.04px;font-size:12px;line-height:12px;color:rgba(0,0,0,0.68);font-weight:400;text-decoration:underline;text-decoration-color:rgba(0,0,0,0.55);text-decoration-thickness:1.2px;text-underline-offset:1.4px;letter-spacing:0.4px">frontend:/cart/checkout</div>
<svg style="left:1176.7px;top:434.8px" width="10" height="3"><rect x="0" y="0.3" width="1.6" height="1.6" fill="#999"/><rect x="3.2" y="0.3" width="1.6" height="1.6" fill="#999"/><rect x="6.4" y="0.3" width="1.6" height="1.6" fill="#999"/></svg>
<div class="t" style="right:111.79999999999995px;top:430.64px;font-size:12px;line-height:12px;color:#505050;font-weight:400;">20.5k</div>
<div class="t" style="right:64.0px;top:430.64px;font-size:12px;line-height:12px;color:#505050;font-weight:400;">15.3k</div>
<div class="t" style="right:15.700000000000045px;top:430.64px;font-size:12px;line-height:12px;color:#505050;font-weight:400;">15.3k</div>
<div class="box" style="left:916.3000000000001px;top:445.3px;width:36.499999999999886px;height:15.5px;background:#e5d4f6"></div>
<div class="box" style="left:916.3000000000001px;top:445.3px;width:27.699999999999932px;height:15.5px;background:#f49c9c"></div>
<div class="t" style="left:921.5000000000001px;top:447.94px;font-size:12px;line-height:12px;color:rgba(0,0,0,0.68);font-weight:400;text-decoration:underline;text-decoration-color:rgba(0,0,0,0.55);text-decoration-thickness:1.2px;text-underline-offset:1.4px;letter-spacing:0.0px">payment:grpc.hipstershop.PaymentServic<span style="text-decoration:none;display:inline-block;letter-spacing:0.6px;margin-left:1px">...</span></div>
<svg style="left:1176.7px;top:451.8px" width="10" height="3"><rect x="0" y="0.3" width="1.6" height="1.6" fill="#999"/><rect x="3.2" y="0.3" width="1.6" height="1.6" fill="#999"/><rect x="6.4" y="0.3" width="1.6" height="1.6" fill="#999"/></svg>
<div class="t" style="right:111.79999999999995px;top:447.54px;font-size:12px;line-height:12px;color:#505050;font-weight:400;">2.9k</div>
<div class="t" style="right:64.0px;top:447.54px;font-size:12px;line-height:12px;color:#505050;font-weight:400;">2.2k</div>
<div class="t" style="right:15.700000000000045px;top:447.54px;font-size:12px;line-height:12px;color:#505050;font-weight:400;">2.2k</div>
<div class="box" style="left:11px;top:543.5px;width:699px;height:40px;border:1.5px solid #ededed;border-radius:5px;background:#fff;box-shadow:0 1.5px 0 #f3f3f3"></div>
<div class="box" style="left:716px;top:543.5px;width:640px;height:40px;border:1.5px solid #ededed;border-radius:5px;background:#fff;box-shadow:0 1.5px 0 #f3f3f3"></div>
<svg style="left:0;top:540px" width="1348" height="52"><ellipse cx="32.9" cy="18.1" rx="1.8" ry="1.5" fill="none" stroke="#1e1e1e" stroke-width="1.5"/><ellipse cx="29" cy="27.5" rx="1.8" ry="1.5" fill="none" stroke="#1e1e1e" stroke-width="1.5"/><ellipse cx="37" cy="27.5" rx="1.8" ry="1.5" fill="none" stroke="#1e1e1e" stroke-width="1.5"/><path d="M32.9,19.7 L32.9,22.6 M29,25.9 L29,22.6 L37,22.6 L37,25.9" fill="none" stroke="#1e1e1e" stroke-width="1.5" stroke-linejoin="round"/><circle cx="736.6" cy="23.4" r="4.6" fill="none" stroke="#222" stroke-width="1.5"/><path d="M740,26.8 L743,29.8" stroke="#222" stroke-width="1.6" stroke-linecap="round"/><path d="M734.6,22 L738.6,22 M734.8,24.6 L737.4,24.6" stroke="#222" stroke-width="1.1"/></svg>
<div class="t" style="left:49.1px;top:557.05px;font-size:14px;line-height:14px;color:#222;font-weight:400;letter-spacing:0.2px">Infrastructure (1)</div>
<div class="t" style="left:753.5px;top:557.05px;font-size:14px;line-height:14px;color:#222;font-weight:400;">Logs (1)</div>
<div class="box" style="left:0;top:591px;width:1348px;height:1px;background:#3a3a3a"></div>
<svg style="left:0;top:0" width="1348" height="592"><path d="M598.3,503.8 L598.3,515.4 L600.9,513 L603,518.6 L605.9,517.5 L603.8,512.4 L607.3,512.2 Z" fill="#000" stroke="#fff" stroke-width="1" stroke-linejoin="round"/></svg>
</body></html>
